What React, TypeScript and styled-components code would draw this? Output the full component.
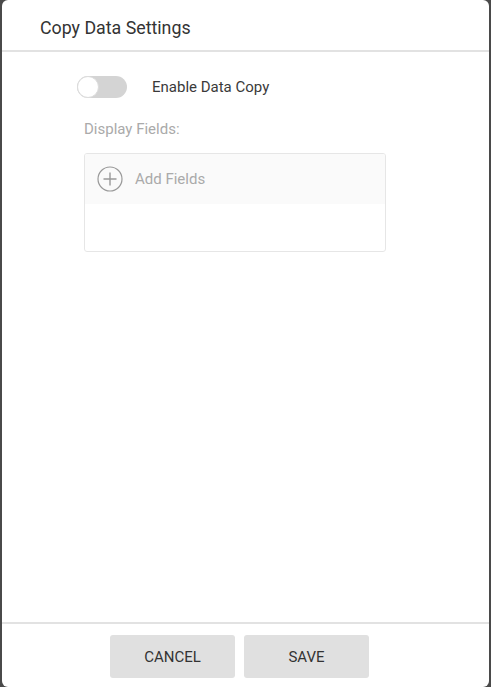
import React, { useState } from 'react';
import styled, { createGlobalStyle } from 'styled-components';

const GlobalStyle = createGlobalStyle`
  html, body {
    margin: 0;
    padding: 0;
    background: #4a4a4a;
    font-family: Roboto, "Liberation Sans", Arial, sans-serif;
  }
  * { box-sizing: border-box; }
`;

const Modal = styled.div`
  margin: 0 2px;
  height: 687px;
  background: #fff;
  border-radius: 6px;
  display: flex;
  flex-direction: column;
  overflow: hidden;
`;

const Header = styled.div`
  height: 52px;
  padding: 4px 38px 0;
  display: flex;
  align-items: center;
  border-bottom: 2px solid #e2e2e2;
  font-size: 17.8px;
  color: #333;
`;

const Body = styled.div`
  flex: 1;
  padding: 24px 0 0 82px;
  display: flex;
  flex-direction: column;
`;

const ToggleRow = styled.div`
  display: flex;
  align-items: center;
  gap: 25px;
  margin-left: -7px;
`;

const Track = styled.button<{ $on: boolean }>`
  position: relative;
  width: 50px;
  height: 22px;
  border: none;
  padding: 0;
  border-radius: 11px;
  background: ${p => (p.$on ? '#8fc3f0' : '#d4d4d4')};
  cursor: pointer;
`;

const Knob = styled.span<{ $on: boolean }>`
  position: absolute;
  top: 0;
  left: ${p => (p.$on ? '28px' : '0')};
  width: 22px;
  height: 22px;
  border-radius: 50%;
  background: #fff;
  border: 1px solid #dcdcdc;
`;

const Label = styled.span`
  font-size: 15px;
  color: #3a3a3a;
`;

const FieldsLabel = styled.div`
  margin-top: 22px;
  font-size: 15px;
  color: #aaa;
`;

const FieldBox = styled.div`
  margin-top: 15px;
  width: 302px;
  height: 99px;
  border: 1px solid #e6e6e6;
  border-radius: 3px;
  overflow: hidden;
`;

const AddRow = styled.div`
  height: 50px;
  background: #fafafa;
  display: flex;
  align-items: center;
  gap: 12px;
  padding-left: 12px;
  font-size: 15px;
  color: #aaa;
  cursor: pointer;
`;

const Footer = styled.div`
  height: 65px;
  border-top: 2px solid #e2e2e2;
  display: flex;
  justify-content: center;
  gap: 9px;
  padding: 11px 12px 0 0;
`;

const Button = styled.button`
  width: 125px;
  height: 43px;
  border: none;
  border-radius: 3px;
  background: #e0e0e0;
  color: #333;
  font-family: Roboto, "Liberation Sans", Arial, sans-serif;
  font-size: 15px;
  text-transform: uppercase;
  cursor: pointer;
`;

const PlusIcon = () => (
  <svg width="26" height="26" viewBox="0 0 26 26">
    <circle cx="13" cy="13" r="12" fill="none" stroke="#999" strokeWidth="1.2" />
    <path d="M13 6.5v13M6.5 13h13" stroke="#999" strokeWidth="1.4" />
  </svg>
);

export default function App() {
  const [on, setOn] = useState(false);
  return (
    <>
      <GlobalStyle />
      <Modal>
        <Header>Copy Data Settings</Header>
        <Body>
          <ToggleRow>
            <Track $on={on} onClick={() => setOn(!on)}>
              <Knob $on={on} />
            </Track>
            <Label>Enable Data Copy</Label>
          </ToggleRow>
          <FieldsLabel>Display Fields:</FieldsLabel>
          <FieldBox>
            <AddRow>
              <PlusIcon />
              Add Fields
            </AddRow>
          </FieldBox>
        </Body>
        <Footer>
          <Button>Cancel</Button>
          <Button>Save</Button>
        </Footer>
      </Modal>
    </>
  );
}
